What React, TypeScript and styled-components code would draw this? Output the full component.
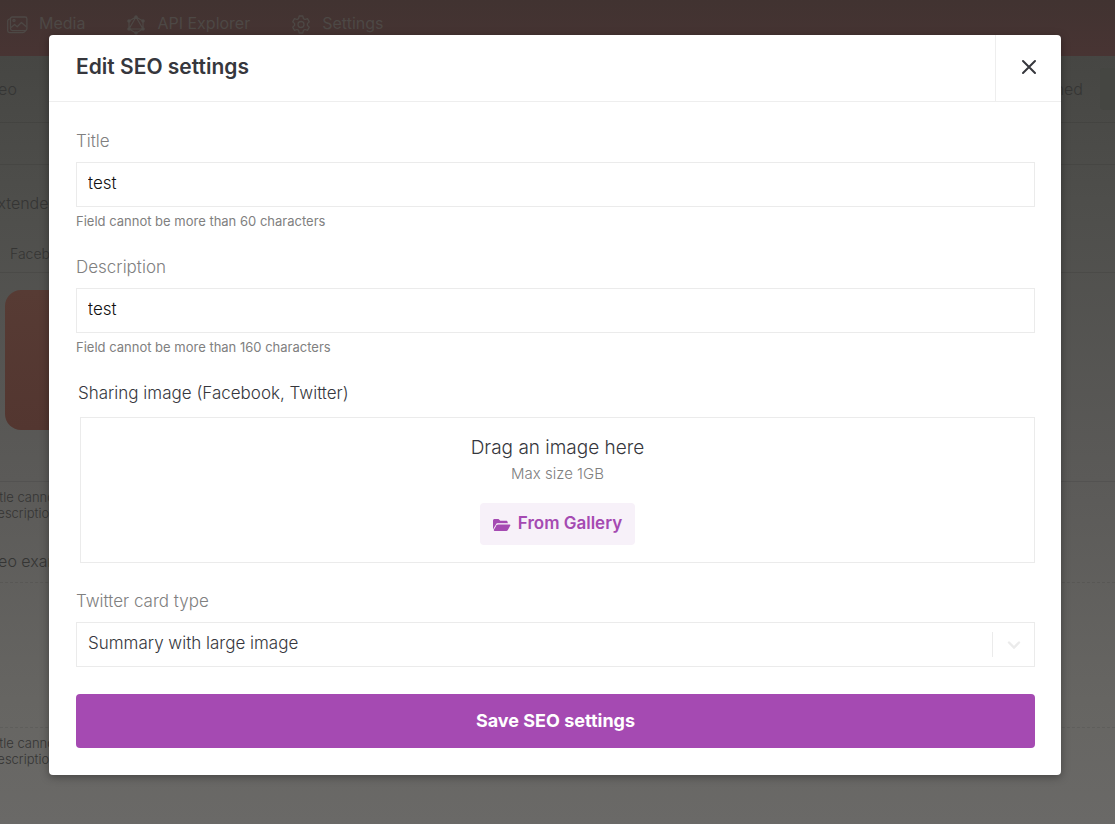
import React from "react";
import styled, { createGlobalStyle } from "styled-components";

const GlobalStyle = createGlobalStyle`
  *, *::before, *::after { box-sizing: border-box; }
  body {
    margin: 0;
    font-family: Inter, "Liberation Sans", sans-serif;
    font-size: 16px;
    font-weight: 300;
    color: #36373d;
    overflow: hidden;
  }
  button, input, select { font: inherit; }
  h1, h2, p { margin: 0; }
`;

const Page = styled.div`
  display: grid;
  min-height: 100vh;
  > * { grid-area: 1 / 1; }
`;

const Backdrop = styled.div`
  min-width: 0;
  overflow: hidden;
  color: #353534;
  background: linear-gradient(#464643 56px, #4e4e4b 200px, #5b5a58 480px, #666562 700px, #6a6967 824px);
`;

const NavBar = styled.nav`
  display: flex;
  gap: 41px;
  height: 56px;
  padding: 11px 7px;
  background: linear-gradient(#413331, #483433);
`;

const NavLink = styled.a`
  display: flex;
  align-items: center;
  gap: 11px;
  height: 24px;
  color: #4d4845;
  font-weight: 400;
  text-decoration: none;
  white-space: nowrap;
  svg { flex: none; margin-top: 4px; }
`;

const TitleRow = styled.div`
  display: flex;
  justify-content: space-between;
  align-items: center;
  height: 67px;
  border-bottom: 1px solid rgba(0, 0, 0, 0.08);
`;

const Status = styled.div`
  display: flex;
  align-items: center;
  gap: 17px;
  &::after {
    content: "";
    width: 15px;
    height: 42px;
    border-radius: 4px 0 0 4px;
    background: #454642;
  }
`;

const Entry = styled.div`
  margin-left: -12px;
  line-height: 24px;
  white-space: nowrap;
`;

const Divider = styled.hr<{ $dashed?: boolean }>`
  margin: 0;
  border: 0;
  border-top: 1px ${(p) => (p.$dashed ? "dashed" : "solid")} rgba(0, 0, 0, 0.08);
`;

const ToolbarSpace = styled.div`
  height: 41px;
`;

const EntryHeading = styled(Entry)`
  padding: 26px 0 27px;
`;

const TabLabel = styled.div`
  padding: 0 10px 6px;
  font-size: 14px;
  line-height: 24px;
`;

const Preview = styled.div`
  width: 320px;
  height: 140px;
  margin: 17px 5px 51px;
  border-radius: 16px;
  background: linear-gradient(#573b34, #533630);
`;

const Notes = styled(Entry)`
  padding-top: 7px;
  font-size: 13px;
  line-height: 16px;
`;

const Example = styled(Entry)`
  padding: 28px 0 9px;
`;

const ExampleArea = styled.div`
  height: 144px;
`;

const Overlay = styled.div`
  z-index: 1;
  padding: 35px 54px 49px 49px;
`;

const Dialog = styled.section`
  border-radius: 4px;
  background: #fff;
  box-shadow: 0 2px 8px rgba(0, 0, 0, 0.35);
`;

const DialogHeader = styled.header`
  display: flex;
  justify-content: space-between;
  height: 67px;
  padding-left: 27px;
  border-bottom: 1px solid #eeeeee;
`;

const DialogTitle = styled.h1`
  font-size: 21px;
  font-weight: 600;
  line-height: 64px;
`;

const CloseButton = styled.button`
  display: grid;
  place-items: center;
  width: 66px;
  padding: 0 0 2px;
  border: 0;
  border-left: 1px solid #eeeeee;
  background: none;
  color: #36373d;
  cursor: pointer;
`;

const Form = styled.form`
  display: flex;
  flex-direction: column;
  gap: 24px;
  padding: 27px 26px 27px 27px;
`;

const Field = styled.div`
  display: flex;
  flex-direction: column;
`;

const Label = styled.label`
  margin-bottom: 9px;
  color: #808080;
  font-size: 17px;
  line-height: 24px;
`;

const TextInput = styled.input`
  height: 45px;
  padding: 0 11px 3px;
  border: 1px solid #ebebeb;
  border-radius: 0;
  background: #fff;
  color: #111;
  font-size: 17px;
  outline: none;
`;

const Hint = styled.p`
  margin-top: 4px;
  color: #808080;
  font-size: 13px;
  font-weight: 400;
  line-height: 20px;
`;

const ImageLabel = styled.h2`
  padding-left: 2px;
  font-size: 17px;
  font-weight: 300;
  line-height: 24px;
`;

const DropZone = styled.div`
  display: flex;
  flex-direction: column;
  align-items: center;
  margin: 12px 0 2px 4px;
  padding: 18px 0 17px;
  border: 1px solid #ebebeb;
`;

const DropTitle = styled.p`
  font-size: 19px;
  line-height: 24px;
`;

const DropNote = styled.p`
  margin: 4px 0 19px;
  color: #808080;
  font-size: 15px;
  line-height: 20px;
`;

const GalleryButton = styled.button`
  display: flex;
  align-items: center;
  gap: 7px;
  height: 42px;
  padding: 0 13px 3px;
  border: 0;
  border-radius: 4px;
  background: #f7f1f9;
  color: #a54ab2;
  font-size: 17px;
  font-weight: 600;
  cursor: pointer;
  svg { margin-top: 4px; }
`;

const SelectBox = styled.div`
  display: grid;
  height: 45px;
  border: 1px solid #ebebeb;
  > * { grid-area: 1 / 1; }
`;

const Select = styled.select`
  padding: 0 54px 3px 11px;
  border: 0;
  appearance: none;
  background: #fff;
  color: #36373d;
  font-size: 17px;
  outline: none;
`;

const SelectIndicator = styled.span`
  display: grid;
  place-items: center;
  align-self: center;
  justify-self: end;
  width: 42px;
  height: 25px;
  border-left: 1px solid #ebebeb;
  color: #ebebeb;
  pointer-events: none;
`;

const SaveButton = styled.button`
  height: 54px;
  margin-top: 3px;
  padding: 0 0 2px;
  border: 0;
  border-radius: 4px;
  background: #a54ab2;
  color: #fff;
  font-size: 18px;
  font-weight: 700;
  cursor: pointer;
`;

const MediaIcon = () => (
  <svg width="21" height="18" viewBox="0 0 21 18" fill="none" stroke="currentColor" strokeWidth="1.3" strokeLinejoin="round" aria-hidden="true">
    <path d="M3.5 2.500 1.500 3.500C1 3.800.7 4.200.7 5v9.800c0 1 .8 1.800 1.800 1.800h13.200c.8 0 1.400-.3 1.900-.8l1.400-1.400" />
    <rect x="3.500" y="1" width="16.400" height="13.600" rx="1.800" />
    <path d="m4 11.500 3.600-3 2.600 2.300 4.200-4.300 5.200 4.500" />
    <circle cx="7" cy="4.400" r="1" />
  </svg>
);

const GraphIcon = () => (
  <svg width="20" height="20" viewBox="0 0 20 20" fill="none" stroke="currentColor" strokeWidth="1.200" aria-hidden="true">
    <path d="m10 2 7 4v8l-7 4-7-4V6zM10 2 3 14h14z" />
    <g fill="currentColor" stroke="none">
      <circle cx="10" cy="2" r="1.800" />
      <circle cx="17" cy="6" r="1.800" />
      <circle cx="17" cy="14" r="1.800" />
      <circle cx="10" cy="18" r="1.800" />
      <circle cx="3" cy="14" r="1.800" />
      <circle cx="3" cy="6" r="1.800" />
    </g>
  </svg>
);

const GearIcon = () => (
  <svg width="20" height="20" viewBox="0 0 20 20" fill="none" stroke="currentColor" strokeWidth="1.300" strokeLinejoin="round" aria-hidden="true">
    <path d="M8.200 1h3.600l.6 2.600 1.600.9 2.500-.8 1.800 3.100-1.900 1.800v1.800l1.900 1.800-1.800 3.100-2.500-.8-1.600.9-.6 2.600H8.200l-.6-2.600-1.600-.9-2.500.8-1.800-3.100 1.900-1.800V8.600L1.700 6.800l1.800-3.100 2.500.8 1.600-.9z" />
    <circle cx="10" cy="9.500" r="3" />
  </svg>
);

const CloseIcon = () => (
  <svg width="16" height="16" viewBox="0 0 16 16" fill="none" stroke="currentColor" strokeWidth="2" strokeLinecap="round" aria-hidden="true">
    <path d="m2 2 12 12M14 2 2 14" />
  </svg>
);

const FolderIcon = () => (
  <svg width="18" height="14" viewBox="0 0 18 14" fill="currentColor" aria-hidden="true">
    <path d="M0 2.500C0 1.700.7 1 1.500 1h4l1.800 1.700h5.900c.8 0 1.500.7 1.500 1.500v1.200H5.200c-1 0-2 .5-2.500 1.400L0 11.400z" />
    <path opacity=".55" d="M4 5h10.700v1H3z" fill="#fff" />
    <path d="M5.200 6.400h11.400c.6 0 1 .6.7 1.200l-2.500 4.500c-.3.500-.8.900-1.400.9H1.600c-.6 0-1-.6-.7-1.200l2.600-4.500c.4-.6 1-.9 1.700-.9z" />
  </svg>
);

const ChevronIcon = () => (
  <svg width="14" height="10" viewBox="0 0 14 10" fill="none" stroke="currentColor" strokeWidth="2.400" strokeLinecap="round" aria-hidden="true">
    <path d="m2 2.500 5 5 5-5" />
  </svg>
);

interface LimitedFieldProps {
  id: string;
  label: string;
  value: string;
  limit: number;
}

const LimitedField = ({ id, label, value, limit }: LimitedFieldProps) => (
  <Field>
    <Label htmlFor={id}>{label}</Label>
    <TextInput id={id} type="text" defaultValue={value} aria-describedby={`${id}-hint`} />
    <Hint id={`${id}-hint`}>Field cannot be more than {limit} characters</Hint>
  </Field>
);

const EditorPage = () => (
  <Backdrop inert>
    <NavBar>
      <NavLink href="#media"><MediaIcon />Media</NavLink>
      <NavLink href="#api"><GraphIcon />API Explorer</NavLink>
      <NavLink href="#settings"><GearIcon />Settings</NavLink>
    </NavBar>
    <TitleRow>
      <Entry>Seo</Entry>
      <Status>Published</Status>
    </TitleRow>
    <ToolbarSpace />
    <Divider />
    <EntryHeading>Extended</EntryHeading>
    <TabLabel>Facebook</TabLabel>
    <Divider />
    <Preview />
    <Divider />
    <Notes>Title cannot be empty<br />Description cannot be empty</Notes>
    <Example>Seo example</Example>
    <Divider $dashed />
    <ExampleArea />
    <Divider $dashed />
    <Notes>Title cannot be empty<br />Description cannot be empty</Notes>
  </Backdrop>
);

export default function App() {
  return (
    <>
      <GlobalStyle />
      <Page>
        <EditorPage />
        <Overlay>
          <Dialog role="dialog" aria-modal="true" aria-labelledby="dialog-title">
            <DialogHeader>
              <DialogTitle id="dialog-title">Edit SEO settings</DialogTitle>
              <CloseButton type="button" aria-label="Close"><CloseIcon /></CloseButton>
            </DialogHeader>
            <Form onSubmit={(e) => e.preventDefault()}>
              <LimitedField id="title" label="Title" value="test" limit={60} />
              <LimitedField id="description" label="Description" value="test" limit={160} />
              <Field>
                <ImageLabel>Sharing image (Facebook, Twitter)</ImageLabel>
                <DropZone>
                  <DropTitle>Drag an image here</DropTitle>
                  <DropNote>Max size 1GB</DropNote>
                  <GalleryButton type="button"><FolderIcon />From Gallery</GalleryButton>
                </DropZone>
              </Field>
              <Field>
                <Label htmlFor="card-type">Twitter card type</Label>
                <SelectBox>
                  <Select id="card-type" defaultValue="large">
                    <option value="large">Summary with large image</option>
                    <option value="summary">Summary</option>
                  </Select>
                  <SelectIndicator><ChevronIcon /></SelectIndicator>
                </SelectBox>
              </Field>
              <SaveButton type="submit">Save SEO settings</SaveButton>
            </Form>
          </Dialog>
        </Overlay>
      </Page>
    </>
  );
}
